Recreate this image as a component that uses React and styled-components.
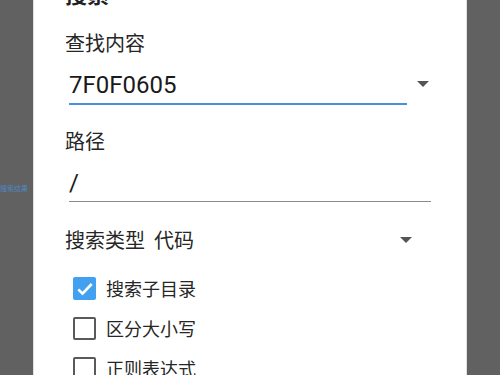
import styled, { createGlobalStyle } from "styled-components";

const GlobalStyle = createGlobalStyle`
    html, body {
        margin: 0;
        padding: 0;
        background: #616161;
        overflow: hidden;
    }
    body {
        font-family: "Roboto", "Noto Sans CJK SC", sans-serif;
    }
`;

const Screen = styled.div`
    display: flex;
    width: 500px;
    height: 375px;
    overflow: hidden;
    background: #616161;
`;

const Side = styled.div`
    width: 33px;
    flex-shrink: 0;
    display: flex;
    align-items: center;
`;

const SideText = styled.span`
    font-family: "Noto Sans CJK SC", sans-serif;
    font-size: 7px;
    color: #4f86c6;
    white-space: nowrap;
`;

const Dialog = styled.div`
    width: 434px;
    flex-shrink: 0;
    background: #ffffff;
    border-left: 1px solid #e0e0e0;
    border-right: 1px solid #e0e0e0;
    box-sizing: border-box;
    padding: 0 0 0 31px;
    display: flex;
    flex-direction: column;
`;

const Title = styled.h2`
    margin: -19px 0 0;
    font-family: "Noto Sans CJK SC", sans-serif;
    font-size: 22px;
    line-height: 24px;
    font-weight: 700;
    color: #212121;
`;

const Label = styled.div`
    font-family: "Noto Sans CJK SC", sans-serif;
    font-size: 20px;
    line-height: 24px;
    color: #262626;
    margin-top: ${({ $top }) => $top}px;
`;

const FieldRow = styled.div`
    display: flex;
    align-items: center;
    margin-top: ${({ $top }) => $top}px;
    padding-left: 4px;
`;

const Field = styled.div`
    width: ${({ $width }) => $width}px;
    border-bottom: ${({ $focus }) => ($focus ? "2px solid #4a90d9" : "1px solid #8a8a8a")};
    font-family: "Roboto", "Noto Sans CJK SC", sans-serif;
    font-size: 24px;
    line-height: 28px;
    color: #1a1a1a;
    padding-bottom: 4px;
`;

const Arrow = styled.span`
    width: 0;
    height: 0;
    border-left: 6px solid transparent;
    border-right: 6px solid transparent;
    border-top: 6px solid #555555;
    margin-left: ${({ $left }) => $left}px;
    margin-top: ${({ $up }) => ($up ? -8 : 0)}px;
`;

const TypeRow = styled.div`
    display: flex;
    align-items: center;
    margin-top: 26px;
`;

const TypeText = styled.span`
    font-family: "Noto Sans CJK SC", sans-serif;
    font-size: 20px;
    line-height: 24px;
    color: #262626;
    width: 335px;
    white-space: pre;
`;

const Options = styled.div`
    display: flex;
    flex-direction: column;
    gap: 17px;
    margin-top: 25px;
    padding-left: 8px;
`;

const Option = styled.label`
    display: flex;
    align-items: center;
    gap: 10px;
    font-family: "Noto Sans CJK SC", sans-serif;
    font-size: 18px;
    line-height: 23px;
    color: #262626;
`;

const Box = styled.span`
    width: 23px;
    height: 23px;
    box-sizing: border-box;
    border-radius: 2px;
    border: ${({ $checked }) => ($checked ? "none" : "2px solid #595959")};
    background: ${({ $checked }) => ($checked ? "#42a0f0" : "transparent")};
    display: flex;
    align-items: center;
    justify-content: center;
    flex-shrink: 0;
`;

const options = [
    { label: "搜索子目录", checked: true },
    { label: "区分大小写", checked: false },
    { label: "正则表达式", checked: false },
];

function App() {
    return (
        <>
            <GlobalStyle />
            <Screen>
                <Side>
                    <SideText>搜索结果</SideText>
                </Side>
                <Dialog>
                    <Title>搜索</Title>
                    <Label $top={26}>查找内容</Label>
                    <FieldRow $top={16}>
                        <Field $width={338} $focus>
                            7F0F0605
                        </Field>
                        <Arrow $left={10} $up />
                    </FieldRow>
                    <Label $top={24}>路径</Label>
                    <FieldRow $top={16}>
                        <Field $width={362}>/</Field>
                    </FieldRow>
                    <TypeRow>
                        <TypeText>搜索类型  代码</TypeText>
                        <Arrow $left={0} />
                    </TypeRow>
                    <Options>
                        {options.map((opt) => (
                            <Option key={opt.label}>
                                <Box $checked={opt.checked}>
                                    {opt.checked ? (
                                        <svg width="20" height="20" viewBox="0 0 24 24">
                                            <path
                                                d="M4 12.5l5 5L20 6"
                                                fill="none"
                                                stroke="#ffffff"
                                                strokeWidth="3.2"
                                            />
                                        </svg>
                                    ) : null}
                                </Box>
                                {opt.label}
                            </Option>
                        ))}
                    </Options>
                </Dialog>
                <Side />
            </Screen>
        </>
    );
}

export default App;
